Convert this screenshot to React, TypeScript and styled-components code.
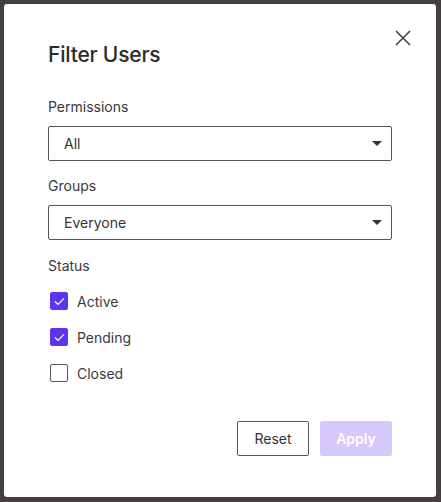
import React, { useState } from 'react'
import styled, { createGlobalStyle } from 'styled-components'

const GlobalStyle = createGlobalStyle`
  html, body {
    margin: 0;
    padding: 0;
    height: 100%;
    background: #433f42;
  }
  #root {
    height: 100%;
  }
  * {
    box-sizing: border-box;
  }
`

const Backdrop = styled.div`
  height: 502px;
  padding: 4px 5px 5px 4px;
  background: #433f42;
`

const Dialog = styled.div`
  position: relative;
  height: 100%;
  background: #fff;
  border-radius: 3px;
  padding: 37px 44px 0 44px;
  font-family: Inter, 'Noto Sans', sans-serif;
  color: #333;
  display: flex;
  flex-direction: column;
`

const Title = styled.h2`
  margin: 0;
  font-size: 21px;
  font-weight: 500;
  line-height: 28px;
  color: #2b2b2b;
  letter-spacing: -0.2px;
`

const CloseButton = styled.button`
  position: absolute;
  top: 20px;
  right: 19px;
  width: 28px;
  height: 28px;
  border: none;
  background: none;
  padding: 0;
  cursor: pointer;
  display: flex;
  align-items: center;
  justify-content: center;
`

const Field = styled.div<{ $top: number }>`
  margin-top: ${(p) => p.$top}px;
  display: flex;
  flex-direction: column;
`

const Label = styled.div`
  font-size: 14px;
  line-height: 18px;
  color: #3a3a3a;
`

const SelectBox = styled.div`
  margin-top: 10px;
  height: 35px;
  border: 1px solid #555;
  border-radius: 2px;
  display: flex;
  align-items: center;
  justify-content: space-between;
  padding: 0 9px 0 15px;
  font-size: 14px;
  color: #333;
`

const Caret = styled.span`
  width: 0;
  height: 0;
  border-left: 5px solid transparent;
  border-right: 5px solid transparent;
  border-top: 5px solid #333;
`

const CheckList = styled.div`
  margin-top: 17px;
  display: flex;
  flex-direction: column;
  gap: 18px;
`

const CheckRow = styled.label`
  display: flex;
  align-items: center;
  gap: 9px;
  padding-left: 2px;
  height: 18px;
  font-size: 14px;
  color: #3a3a3a;
  cursor: pointer;
`

const Box = styled.span<{ $checked: boolean }>`
  width: 18px;
  height: 18px;
  border-radius: 2px;
  border: 1px solid ${(p) => (p.$checked ? '#5b35f2' : '#555')};
  background: ${(p) => (p.$checked ? '#5b35f2' : '#fff')};
  display: flex;
  align-items: center;
  justify-content: center;
`

const Footer = styled.div`
  margin-top: 39px;
  display: flex;
  justify-content: flex-end;
  gap: 11px;
`

const Button = styled.button<{ $primary?: boolean }>`
  width: 72px;
  height: 35px;
  border-radius: 2px;
  font-family: Inter, 'Noto Sans', sans-serif;
  font-size: 14px;
  border: 1px solid ${(p) => (p.$primary ? '#d5c8fb' : '#555')};
  background: ${(p) => (p.$primary ? '#d5c8fb' : '#fff')};
  color: ${(p) => (p.$primary ? '#fff' : '#333')};
  font-weight: ${(p) => (p.$primary ? 600 : 400)};
  cursor: pointer;
`

const statuses = ['Active', 'Pending', 'Closed']

function Check({ on }: { on: boolean }) {
  return (
    <Box $checked={on}>
      {on && (
        <svg width="11" height="9" viewBox="0 0 11 9">
          <path d="M1 4.6 L4 7.4 L10 1.4" fill="none" stroke="#fff" strokeWidth="1.3" />
        </svg>
      )}
    </Box>
  )
}

function App() {
  const [checked, setChecked] = useState<Record<string, boolean>>({
    Active: true,
    Pending: true,
    Closed: false,
  })

  return (
    <Backdrop>
      <GlobalStyle />
      <Dialog>
        <CloseButton aria-label="Close">
          <svg width="16" height="16" viewBox="0 0 16 16">
            <path d="M1 1 L15 15 M15 1 L1 15" stroke="#444" strokeWidth="1.6" />
          </svg>
        </CloseButton>
        <Title>Filter Users</Title>

        <Field $top={29}>
          <Label>Permissions</Label>
          <SelectBox>
            All
            <Caret />
          </SelectBox>
        </Field>

        <Field $top={16}>
          <Label>Groups</Label>
          <SelectBox>
            Everyone
            <Caret />
          </SelectBox>
        </Field>

        <Field $top={17}>
          <Label>Status</Label>
          <CheckList>
            {statuses.map((s) => (
              <CheckRow key={s} onClick={() => setChecked({ ...checked, [s]: !checked[s] })}>
                <Check on={checked[s]} />
                {s}
              </CheckRow>
            ))}
          </CheckList>
        </Field>

        <Footer>
          <Button>Reset</Button>
          <Button $primary>Apply</Button>
        </Footer>
      </Dialog>
    </Backdrop>
  )
}

export default App
